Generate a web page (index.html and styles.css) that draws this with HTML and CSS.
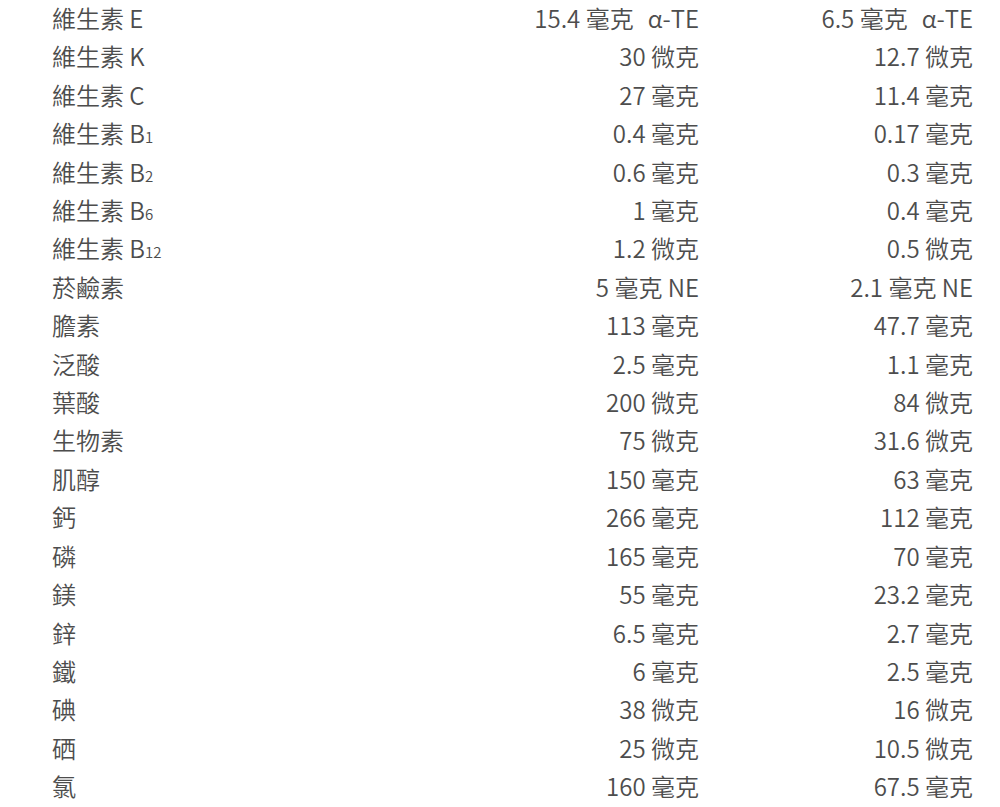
FILE: index.html
```html
<!DOCTYPE html>
<html lang="zh-Hant">
<head>
<meta charset="utf-8">
<link rel="stylesheet" href="styles.css">
</head>
<body>
<div class="table">
  <div class="row"><div class="name">維生素 E</div><div class="val">15.4 毫克<span class="unit">α-TE</span></div><div class="val">6.5 毫克<span class="unit">α-TE</span></div></div>
  <div class="row"><div class="name">維生素 K</div><div class="val">30 微克</div><div class="val">12.7 微克</div></div>
  <div class="row"><div class="name">維生素 C</div><div class="val">27 毫克</div><div class="val">11.4 毫克</div></div>
  <div class="row"><div class="name">維生素 B<span class="sub">1</span></div><div class="val">0.4 毫克</div><div class="val">0.17 毫克</div></div>
  <div class="row"><div class="name">維生素 B<span class="sub">2</span></div><div class="val">0.6 毫克</div><div class="val">0.3 毫克</div></div>
  <div class="row"><div class="name">維生素 B<span class="sub">6</span></div><div class="val">1 毫克</div><div class="val">0.4 毫克</div></div>
  <div class="row"><div class="name">維生素 B<span class="sub">12</span></div><div class="val">1.2 微克</div><div class="val">0.5 微克</div></div>
  <div class="row"><div class="name">菸鹼素</div><div class="val">5 毫克 NE</div><div class="val">2.1 毫克 NE</div></div>
  <div class="row"><div class="name">膽素</div><div class="val">113 毫克</div><div class="val">47.7 毫克</div></div>
  <div class="row"><div class="name">泛酸</div><div class="val">2.5 毫克</div><div class="val">1.1 毫克</div></div>
  <div class="row"><div class="name">葉酸</div><div class="val">200 微克</div><div class="val">84 微克</div></div>
  <div class="row"><div class="name">生物素</div><div class="val">75 微克</div><div class="val">31.6 微克</div></div>
  <div class="row"><div class="name">肌醇</div><div class="val">150 毫克</div><div class="val">63 毫克</div></div>
  <div class="row"><div class="name">鈣</div><div class="val">266 毫克</div><div class="val">112 毫克</div></div>
  <div class="row"><div class="name">磷</div><div class="val">165 毫克</div><div class="val">70 毫克</div></div>
  <div class="row"><div class="name">鎂</div><div class="val">55 毫克</div><div class="val">23.2 毫克</div></div>
  <div class="row"><div class="name">鋅</div><div class="val">6.5 毫克</div><div class="val">2.7 毫克</div></div>
  <div class="row"><div class="name">鐵</div><div class="val">6 毫克</div><div class="val">2.5 毫克</div></div>
  <div class="row"><div class="name">碘</div><div class="val">38 微克</div><div class="val">16 微克</div></div>
  <div class="row"><div class="name">硒</div><div class="val">25 微克</div><div class="val">10.5 微克</div></div>
  <div class="row"><div class="name">氯</div><div class="val">160 毫克</div><div class="val">67.5 毫克</div></div>
</div>
</body>
</html>
```
FILE: styles.css
```css
html, body {
  margin: 0;
  padding: 0;
  background: #fff;
}
body {
  font-family: "Noto Sans CJK TC", "Noto Sans", sans-serif;
  font-weight: 350;
  font-size: 24px;
  color: #4d4d4d;
}
.table {
  margin-top: -1px;
  padding-left: 52px;
  width: 921px;
}
.row {
  display: grid;
  grid-template-columns: 1fr 260px 274px;
  line-height: 38.4px;
}
.val {
  text-align: right;
  white-space: nowrap;
}
.unit {
  margin-left: 14px;
}
.sub {
  font-size: 15px;
  line-height: 0;
}
```
